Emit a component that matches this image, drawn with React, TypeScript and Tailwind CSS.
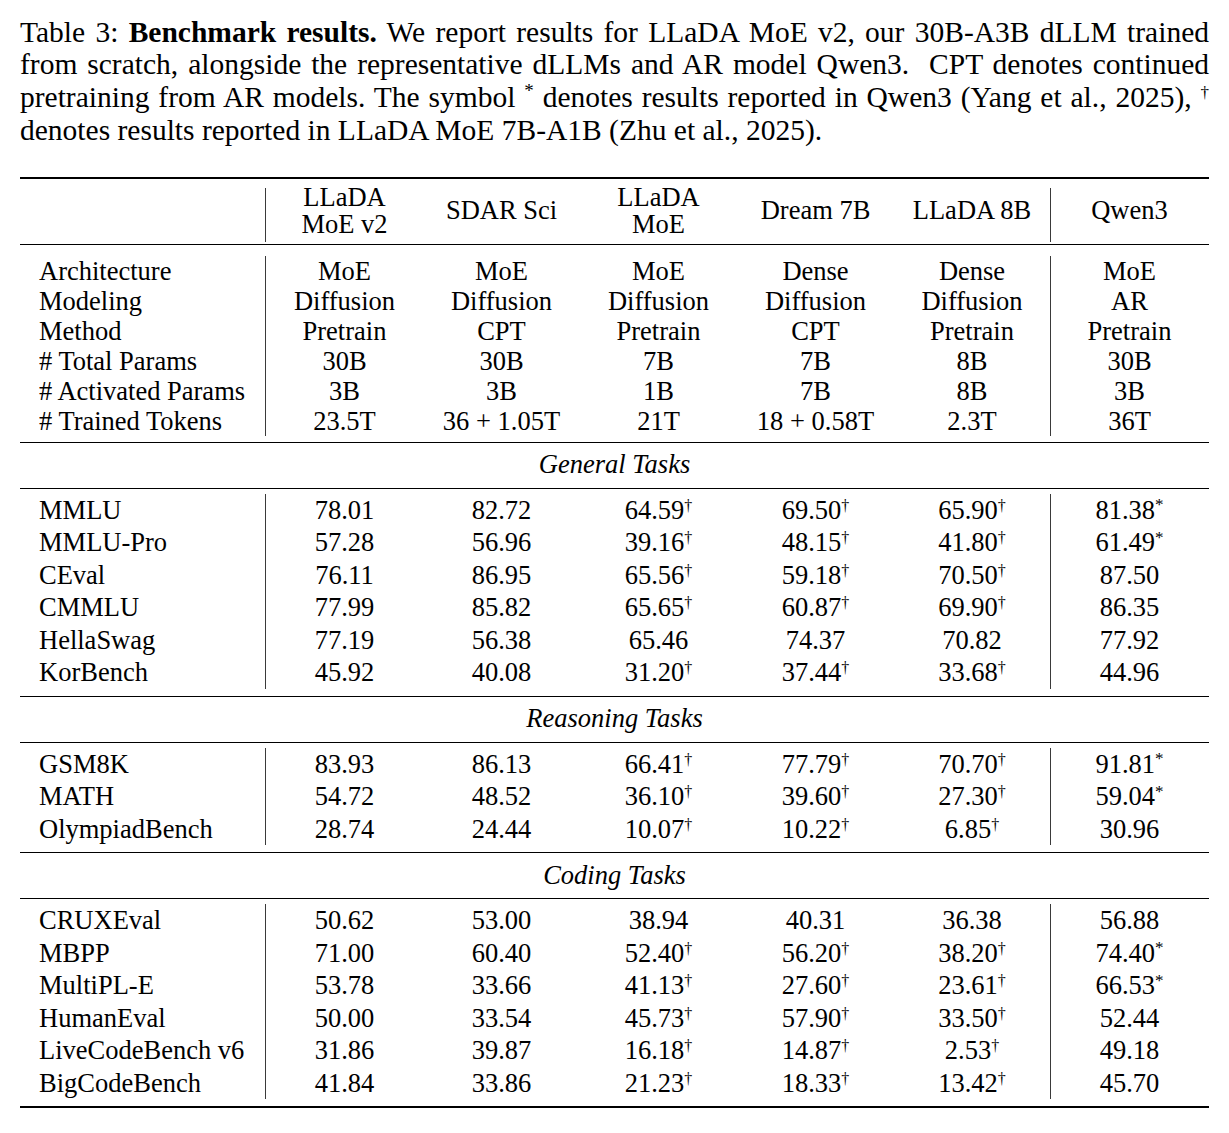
import React from "react";

const GRID = "grid grid-cols-[246px_repeat(5,157px)_157px]";
const SERIF = "font-['Liberation_Serif','Times_New_Roman',serif]";

const INFO_ROWS: string[][] = [
  ["Architecture", "MoE", "MoE", "MoE", "Dense", "Dense", "MoE"],
  ["Modeling", "Diffusion", "Diffusion", "Diffusion", "Diffusion", "Diffusion", "AR"],
  ["Method", "Pretrain", "CPT", "Pretrain", "CPT", "Pretrain", "Pretrain"],
  ["# Total Params", "30B", "30B", "7B", "7B", "8B", "30B"],
  ["# Activated Params", "3B", "3B", "1B", "7B", "8B", "3B"],
  ["# Trained Tokens", "23.5T", "36 + 1.05T", "21T", "18 + 0.58T", "2.3T", "36T"],
];

const SECTIONS: { title: string; rows: string[][] }[] = [
  {
    title: "General Tasks",
    rows: [
      ["MMLU", "78.01", "82.72", "64.59†", "69.50†", "65.90†", "81.38*"],
      ["MMLU-Pro", "57.28", "56.96", "39.16†", "48.15†", "41.80†", "61.49*"],
      ["CEval", "76.11", "86.95", "65.56†", "59.18†", "70.50†", "87.50"],
      ["CMMLU", "77.99", "85.82", "65.65†", "60.87†", "69.90†", "86.35"],
      ["HellaSwag", "77.19", "56.38", "65.46", "74.37", "70.82", "77.92"],
      ["KorBench", "45.92", "40.08", "31.20†", "37.44†", "33.68†", "44.96"],
    ],
  },
  {
    title: "Reasoning Tasks",
    rows: [
      ["GSM8K", "83.93", "86.13", "66.41†", "77.79†", "70.70†", "91.81*"],
      ["MATH", "54.72", "48.52", "36.10†", "39.60†", "27.30†", "59.04*"],
      ["OlympiadBench", "28.74", "24.44", "10.07†", "10.22†", "6.85†", "30.96"],
    ],
  },
  {
    title: "Coding Tasks",
    rows: [
      ["CRUXEval", "50.62", "53.00", "38.94", "40.31", "36.38", "56.88"],
      ["MBPP", "71.00", "60.40", "52.40†", "56.20†", "38.20†", "74.40*"],
      ["MultiPL-E", "53.78", "33.66", "41.13†", "27.60†", "23.61†", "66.53*"],
      ["HumanEval", "50.00", "33.54", "45.73†", "57.90†", "33.50†", "52.44"],
      ["LiveCodeBench v6", "31.86", "39.87", "16.18†", "14.87†", "2.53†", "49.18"],
      ["BigCodeBench", "41.84", "33.86", "21.23†", "18.33†", "13.42†", "45.70"],
    ],
  },
];

const Value = ({ text }: { text: string }) => {
  const mark = text.endsWith("†") || text.endsWith("*") ? text.slice(-1) : "";
  const num = mark ? text.slice(0, -1) : text;
  return (
    <span>
      {num}
      {mark && (
        <sup className={mark === "*" ? "text-[17px]" : "text-[16px]"}>{mark}</sup>
      )}
    </span>
  );
};

const Row = ({ cells, rowClass }: { cells: string[]; rowClass: string }) => (
  <div className={GRID}>
    {cells.map((cell, i) => (
      <div
        key={i}
        className={
          i === 0
            ? `${rowClass} border-r border-[#3a3a3a] pl-[19px] whitespace-nowrap`
            : i === 5
              ? `${rowClass} border-r border-[#3a3a3a] text-center whitespace-nowrap`
              : `${rowClass} text-center whitespace-nowrap`
        }
      >
        <Value text={cell} />
      </div>
    ))}
  </div>
);

const HEADERS: string[][] = [
  [],
  ["LLaDA", "MoE v2"],
  ["SDAR Sci"],
  ["LLaDA", "MoE"],
  ["Dream 7B"],
  ["LLaDA 8B"],
  ["Qwen3"],
];

export default function App() {
  return (
    <div className={`${SERIF} w-[1229px] bg-white px-[20px] pt-[15.5px] pb-[23px] text-black`}>
      <p className="text-[29.5px] leading-[32.7px]">
        <span className="block text-justify [text-align-last:justify]">
          Table 3: <b>Benchmark results.</b> We report results for LLaDA MoE v2, our 30B-A3B dLLM trained
        </span>
        <span className="block text-justify [text-align-last:justify]">
          from scratch, alongside the representative dLLMs and AR model Qwen3.&nbsp; CPT denotes continued
        </span>
        <span className="block text-justify [text-align-last:justify]">
          pretraining from AR models. The symbol <sup className="text-[19px]">*</sup> denotes results reported in
          Qwen3 (Yang et al., 2025), <sup className="text-[17px]">†</sup>
        </span>
        <span className="block">denotes results reported in LLaDA MoE 7B-A1B (Zhu et al., 2025).</span>
      </p>

      <div className="mt-[30.5px] text-[26.5px]">
        <div className="h-[2px] bg-black" />

        {/* header */}
        <div className={`${GRID} pt-[9px] pb-[2px]`}>
          {HEADERS.map((lines, i) => (
            <div
              key={i}
              className={
                i === 0 || i === 5
                  ? "flex h-[54px] flex-col justify-center border-r border-[#3a3a3a]"
                  : "flex h-[54px] flex-col justify-center"
              }
            >
              <div className="-translate-y-[4px] text-center leading-[27px]">
                {lines.map((l) => (
                  <div key={l}>{l}</div>
                ))}
              </div>
            </div>
          ))}
        </div>
        <div className="h-px bg-black" />

        {/* model info */}
        <div className="pt-[11px] pb-[6px]">
          {INFO_ROWS.map((r) => (
            <Row key={r[0]} cells={r} rowClass="h-[30px] leading-[30px]" />
          ))}
        </div>

        {SECTIONS.map((s) => (
          <div key={s.title}>
            <div className="h-px bg-black" />
            <div className="flex h-[45px] items-center justify-center italic">{s.title}</div>
            <div className="h-px bg-black" />
            <div className="pt-[5px] pb-[7px]">
              {s.rows.map((r) => (
                <Row key={r[0]} cells={r} rowClass="h-[32.5px] leading-[32.5px]" />
              ))}
            </div>
          </div>
        ))}

        <div className="h-[2px] bg-black" />
      </div>
    </div>
  );
}
